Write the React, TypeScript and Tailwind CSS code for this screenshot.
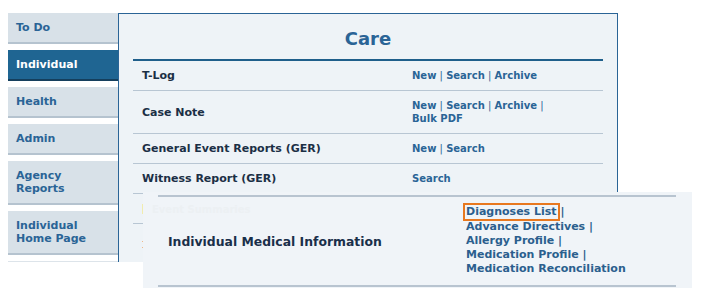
const tabs = [
  { label: ['To Do'], active: false },
  { label: ['Individual'], active: true },
  { label: ['Health'], active: false },
  { label: ['Admin'], active: false },
  { label: ['Agency', 'Reports'], active: false },
  { label: ['Individual', 'Home Page'], active: false },
];

const rows = [
  { name: 'T-Log', links: [['New', 'Search', 'Archive']] },
  { name: 'Case Note', links: [['New', 'Search', 'Archive', ''], ['Bulk PDF']] },
  { name: 'General Event Reports (GER)', links: [['New', 'Search']] },
  { name: 'Witness Report (GER)', links: [['Search']] },
];

const medLinks = ['Diagnoses List', 'Advance Directives', 'Allergy Profile', 'Medication Profile', 'Medication Reconciliation'];

function LinkLine({ items }: { items: string[] }) {
  return (
    <div>
      {items.map((item, i) => (
        <span key={i}>
          {i > 0 && <span className="font-normal text-[#2a6496]"> | </span>}
          {item && <span>{item}</span>}
        </span>
      ))}
    </div>
  );
}

export default function App() {
  return (
    <div className="relative w-[704px] h-[299px] bg-white overflow-hidden font-['DejaVu_Sans',sans-serif] font-bold">
      {/* Underlying page */}
      <div className="flex pt-[13px] pl-[8px] h-[262px] overflow-hidden">
        {/* Side tabs */}
        <nav className="w-[110px] flex flex-col gap-[6px] shrink-0">
          {tabs.map((tab, idx) => (
            <div
              key={idx}
              className={`shrink-0 flex flex-col justify-center pl-[8px] text-[11px] leading-[13px] border-b-2 ${
                tab.label.length > 1 ? 'h-[44px]' : 'h-[31px]'
              } ${tab.active ? 'bg-[#1f6592] border-[#153f5d] text-white' : 'bg-[#d8e1e8] border-[#b5c3cf] text-[#2a6496]'}`}
            >
              {tab.label.map((l) => (
                <span key={l}>{l}</span>
              ))}
            </div>
          ))}
          <div className="shrink-0 h-[31px] bg-[#dde4ea]" />
        </nav>

        {/* Care panel */}
        <main className="w-[500px] shrink-0 bg-[#eef3f7] border-l border-t border-r border-[#2a6496] px-[14px]">
          <h1 className="h-[45px] flex items-end justify-center pb-[9px] text-[18px] leading-[22px] text-[#2a6496]">Care</h1>
          <div className="border-t-2 border-[#1f5f8b]">
            {rows.map((row) => (
              <div key={row.name} className="flex items-center border-b border-[#b8c6d3] py-[8px]">
                <div className="w-[279px] pl-[9px] text-[11px] leading-[13px] text-[#1b2f45]">{row.name}</div>
                <div className="text-[10px] leading-[13px] text-[#2a6496]">
                  {row.links.map((line, i) => (
                    <LinkLine key={i} items={line} />
                  ))}
                </div>
              </div>
            ))}
            <div className="flex items-center border-b border-[#b8c6d3] h-[30px]">
              <div className="pl-[9px] flex items-center text-[11px] text-[#1b2f45]">
                <span className="w-px h-[10px] bg-[#f1ecae]" />
              </div>
            </div>
            <div className="flex items-center h-[40px]">
              <div className="pl-[9px] flex flex-col gap-[5px]">
                <span className="w-px h-px bg-[#f0b98a]" />
                <span className="w-px h-px bg-[#f0b98a]" />
              </div>
            </div>
          </div>
        </main>
      </div>

      {/* Magnified callout */}
      <div className="absolute left-[143px] top-[192px] w-[549px] h-[96px] bg-[#f0f4f8] pt-[3px] pl-[15px] pr-[16px]">
        <span className="absolute left-[9px] top-[10px] text-[10px] text-[#ecf0f3]">Event Summaries</span>
        <div className="relative flex items-center border-t-2 border-b-2 border-[#b8c4d0] h-[92px]">
          <div className="w-[308px] pl-[10px] text-[12.4px] leading-[15px] text-[#1a2f4a]">Individual Medical Information</div>
          <div className="text-[11px] leading-[14.25px] text-[#2b5f8e]">
            {medLinks.map((l, i) => (
              <div key={l}>
                <span className="relative">
                  {l}
                  {i === 0 && <span className="absolute -left-[3px] -right-[3px] -top-[2px] -bottom-[3px] border-2 border-[#e8781f]" />}
                </span>
                {i < medLinks.length - 1 && <span> |</span>}
              </div>
            ))}
          </div>
        </div>
      </div>
    </div>
  );
}
